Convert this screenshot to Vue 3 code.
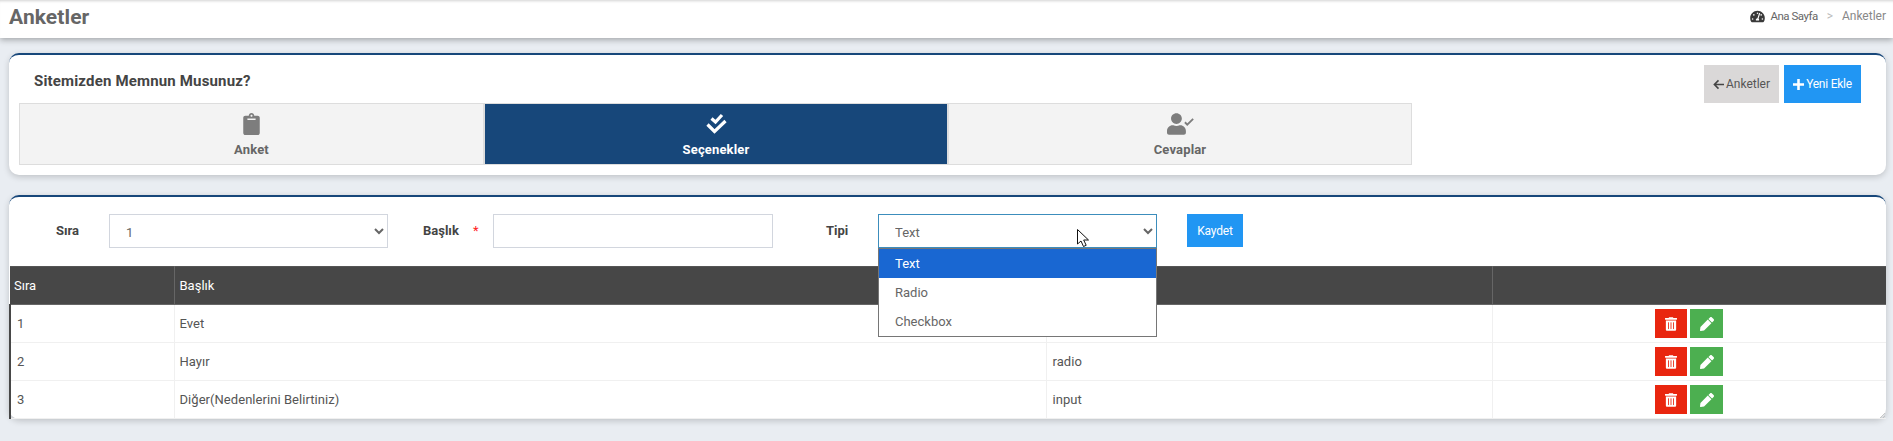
<script setup>
const rows = [
  { n: 1, t: 'Evet', k: '' },
  { n: 2, t: 'Hayır', k: 'radio' },
  { n: 3, t: 'Diğer(Nedenlerini Belirtiniz)', k: 'input' }
]
const opts = ['Text', 'Radio', 'Checkbox']
</script>

<template>
  <div class="page">
    <header class="topbar">
      <h1>Anketler</h1>
      <nav class="crumbs">
        <svg class="gauge" viewBox="0 0 576 512"><path fill="#3a3a3a" d="M288 32C129 32 0 161 0 320c0 53 14 102 39 144 6 10 16 16 28 16h442c12 0 22-6 28-16 25-42 39-91 39-144C576 161 447 32 288 32zm0 64c18 0 32 14 32 32s-14 32-32 32-32-14-32-32 14-32 32-32zM96 384c-18 0-32-14-32-32s14-32 32-32 32 14 32 32-14 32-32 32zm48-160c-18 0-32-14-32-32s14-32 32-32 32 14 32 32-14 32-32 32zm246-72-61 184c14 11 23 28 23 48 0 11-3 22-8 32H230c-5-10-8-21-8-32 0-35 28-64 63-64l61-184c4-12 17-18 29-14 12 4 19 17 15 30zM432 160c18 0 32 14 32 32s-14 32-32 32-32-14-32-32 14-32 32-32zm48 224c-18 0-32-14-32-32s14-32 32-32 32 14 32 32-14 32-32 32z"/></svg>
        <span class="home">Ana Sayfa</span>
        <span class="sep">&gt;</span>
        <span class="cur">Anketler</span>
      </nav>
    </header>

    <main class="content">
      <section class="card top">
        <div class="top-left">
          <h2>Sitemizden Memnun Musunuz?</h2>
          <div class="tabs">
            <div class="tab">
              <svg class="ti" viewBox="0 0 384 512" width="17" height="22"><path fill="#7d7d7d" d="M336 64h-80c0-35-29-64-64-64s-64 29-64 64H48C22 64 0 86 0 112v352c0 26 22 48 48 48h288c26 0 48-22 48-48V112c0-26-22-48-48-48zM192 40c13 0 24 11 24 24s-11 24-24 24-24-11-24-24 11-24 24-24zm96 114c0 3-3 6-6 6H102c-3 0-6-3-6-6v-20c0-3 3-6 6-6h180c3 0 6 3 6 6v20z"/></svg>
              <span>Anket</span>
            </div>
            <div class="tab active">
              <svg class="ti" viewBox="0 0 21 22" width="21" height="22"><path fill="none" stroke="#fff" stroke-width="3.200" d="M5.500 5.500l4 3.500 6.500-7M1.500 11.500l7 7 11-10.500"/></svg>
              <span>Seçenekler</span>
            </div>
            <div class="tab">
              <svg class="ti" viewBox="0 0 640 512" width="27" height="22"><path fill="#7d7d7d" d="M224 256c71 0 128-57 128-128S295 0 224 0 96 57 96 128s57 128 128 128zm90 32h-17c-22 10-46 16-73 16s-51-6-73-16h-17C60 288 0 348 0 422v42c0 27 22 48 48 48h352c27 0 48-21 48-48v-42c0-74-60-134-134-134z"/><path fill="none" stroke="#7d7d7d" stroke-width="44" d="M425 215l55 55 140-135"/></svg>
              <span>Cevaplar</span>
            </div>
          </div>
        </div>
        <div class="actions">
          <button class="btn grey">
            <svg viewBox="0 0 12 12" width="11" height="11"><path fill="none" stroke="#444" stroke-width="1.700" d="M6 1.500L1.500 6 6 10.500M1.500 6H12"/></svg>Anketler
          </button>
          <button class="btn blue yeni">
            <svg viewBox="0 0 12 12" width="11" height="11"><path fill="none" stroke="#fff" stroke-width="2.800" d="M6 0v12M0 6h12"/></svg>Yeni Ekle
          </button>
        </div>
      </section>

      <section class="card second">
        <form class="form" @submit.prevent>
          <label class="lbl l1">Sıra</label>
          <select class="ctl s1"><option>1</option></select>
          <label class="lbl l2">Başlık <i>*</i></label>
          <input class="ctl i1" type="text" />
          <label class="lbl l3">Tipi</label>
          <div class="sel-wrap">
            <select class="ctl s2 focus"><option>Text</option></select>
            <ul class="drop">
              <li v-for="(o, i) in opts" :key="o" :class="{ on: i === 0 }">{{ o }}</li>
            </ul>
            <svg class="cursor" viewBox="0 0 13 20" width="13" height="20"><path fill="#fff" stroke="#111" stroke-width="1" d="M.5.500v14.500l3.500-3 2.500 5.500 2.700-1.200-2.500-5.300h4.800z"/></svg>
          </div>
          <button class="btn blue save">Kaydet</button>
        </form>

        <div class="tablewrap">
          <table>
            <colgroup>
              <col class="c1" /><col class="c2" /><col class="c3" /><col />
            </colgroup>
            <thead>
              <tr><th>Sıra</th><th>Başlık</th><th></th><th></th></tr>
            </thead>
            <tbody>
              <tr v-for="r in rows" :key="r.n">
                <td>{{ r.n }}</td>
                <td>{{ r.t }}</td>
                <td class="kind">{{ r.k }}</td>
                <td class="ops">
                  <span class="op red">
                    <svg viewBox="0 0 448 512" width="12" height="14"><path fill="#fff" d="M32 464c0 26 22 48 48 48h288c26 0 48-22 48-48V128H32zm272-256c0-9 7-16 16-16s16 7 16 16v224c0 9-7 16-16 16s-16-7-16-16zm-96 0c0-9 7-16 16-16s16 7 16 16v224c0 9-7 16-16 16s-16-7-16-16zm-96 0c0-9 7-16 16-16s16 7 16 16v224c0 9-7 16-16 16s-16-7-16-16zM432 32H312l-9-19C299 5 291 0 282 0H166c-9 0-17 5-21 13l-9 19H16C7 32 0 39 0 48v32c0 9 7 16 16 16h416c9 0 16-7 16-16V48c0-9-7-16-16-16z"/></svg>
                  </span>
                  <span class="op green">
                    <svg viewBox="0 0 512 512" width="14" height="14"><path fill="#fff" d="M497 75 437 15c-20-20-52-20-72 0l-57 57 132 132 57-57c20-20 20-52 0-72zM285 95 16 364 0 488c-2 14 10 26 24 24l124-16 269-269z"/></svg>
                  </span>
                </td>
              </tr>
            </tbody>
          </table>
        </div>
        <svg class="grip" viewBox="0 0 6 6" width="6" height="6"><path fill="none" stroke="#bbb" stroke-width=".8" d="M6 1 1 6M6 4 4 6"/></svg>
      </section>
    </main>
  </div>
</template>

<style>
html, body { margin: 0; background: #e9edf2; overflow: hidden; }
</style>

<style scoped>
.page { font-family: Roboto, "Liberation Sans", sans-serif; color: #555; height: 441px; overflow: hidden; }
.topbar { height: 38px; background: #fff; display: flex; align-items: center; justify-content: space-between; padding: 0 7px 0 9px; box-shadow: 0 2px 6px rgba(0,0,0,.3), inset 0 3px 3px -2px rgba(0,0,0,.18); position: relative; }
h1 { margin: 0; font-size: 21px; font-weight: 700; color: #666; position: relative; top: -2px; letter-spacing: .1px; }
.crumbs { display: flex; align-items: center; font-size: 12px; color: #666; position: relative; top: -3px; }
.gauge { width: 15px; height: 13px; margin-right: 5px; }
.home { font-size: 11.5px; letter-spacing: -.5px; }
.sep { color: #bbb; margin: 0 9px; }
.cur { color: #888; }
.content { padding: 15px 7px 0 9px; }
.card { background: #fff; border-top: 2px solid #17477a; border-radius: 10px; box-shadow: 0 2px 6px rgba(0,0,0,.18); }
.top { height: 120px; display: flex; justify-content: space-between; }
.top-left { padding-left: 10px; }
h2 { margin: 0; padding: 0 0 0 15px; height: 48px; line-height: 52px; font-size: 15px; font-weight: 700; color: #444; letter-spacing: .17px; }
.tabs { display: grid; grid-template-columns: 465px 464px 464px; }
.tab { height: 62px; box-sizing: border-box; border: 1px solid #ddd; background: #f3f3f3; display: flex; flex-direction: column; align-items: center; color: #666; font-size: 13px; font-weight: 700; padding-top: 9px; letter-spacing: .15px; }
.tab span { margin-top: 7px; }
.tab.active { background: #17477a; color: #fff; }
.actions { display: flex; gap: 5px; padding: 10px 25px 0 0; }
.btn { border: 0; height: 38px; font: inherit; font-size: 12px; display: inline-flex; align-items: center; justify-content: center; gap: 2px; padding: 0; }
.grey { width: 75px; background: #dad8d8; color: #555; }
.blue { width: 77px; background: #2196f3; color: #fff; }
.yeni { letter-spacing: -.25px; }
.second { margin-top: 20px; height: 222px; display: flex; flex-direction: column; position: relative; }
.grip { position: absolute; right: 1px; bottom: 1px; }
.form { display: flex; align-items: flex-start; height: 69px; padding-top: 17px; box-sizing: border-box; font-size: 13px; }
.lbl { font-weight: 700; color: #444; height: 34px; line-height: 34px; }
.lbl i { color: #f22; font-style: normal; font-weight: 400; margin-left: 11px; }
.l1 { margin-left: 47px; width: 53px; }
.l2 { margin-left: 35px; width: 70px; }
.l3 { margin-left: 53px; width: 52px; }
.ctl { width: 279px; height: 34px; box-sizing: border-box; border: 1px solid #d2d6de; background: #fff; font: inherit; color: #666; padding: 3px 12px 0; border-radius: 0; outline: none; }
.i1 { width: 280px; }
.focus { border-color: #3c8dbc; }
.sel-wrap { position: relative; width: 279px; height: 34px; }
.drop { position: absolute; left: 0; top: 34px; width: 279px; box-sizing: border-box; border: 1px solid #767676; background: #fff; list-style: none; margin: 0; padding: 0; z-index: 3; }
.drop li { height: 29px; line-height: 29px; padding-left: 16px; color: #666; }
.drop li.on { background: #1967d2; color: #fff; }
.cursor { position: absolute; left: 199px; top: 15px; z-index: 4; }
.save { width: 56px; height: 33px; margin-left: 30px; font-size: 12px; letter-spacing: -.15px; }
.tablewrap { flex: 1; }
table { width: 100%; border-collapse: collapse; table-layout: fixed; font-size: 13px; }
.c1 { width: 164px; }
.c2 { width: 872px; }
.c3 { width: 446px; }
th { background: #474747; color: #fff; height: 38px; box-sizing: border-box; text-align: left; font-weight: 400; padding: 0 5px; border-right: 1px solid #666; border-bottom: 1px solid #666; border-top: 1px solid #555; }
th:first-child { padding-left: 4px; }
th:last-child { border-right: 0; }
td { height: 38px; padding: 0 5px; box-sizing: border-box; border-right: 1px solid #f0f0f0; border-bottom: 1px solid #f0f0f0; color: #555; letter-spacing: .05px; }
td:last-child { border-right: 0; }
td:first-child { border-left: 2px solid #474747; padding-left: 6px; }
.kind { padding-left: 6px; }
.ops { text-align: center; padding: 0; }
.op { display: inline-flex; width: 32px; height: 29px; align-items: center; justify-content: center; vertical-align: middle; }
.red { background: #e9260f; margin-right: 3px; }
.green { background: #4caf50; width: 33px; }
</style>
